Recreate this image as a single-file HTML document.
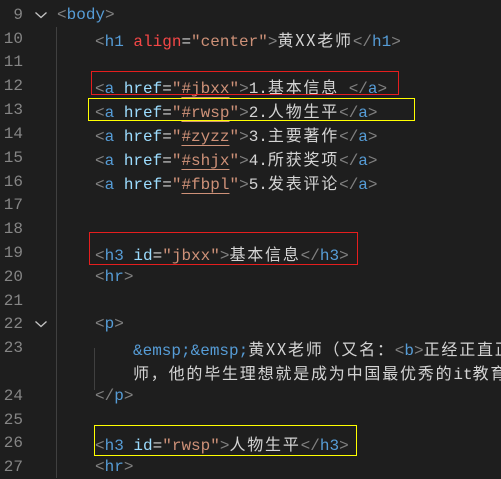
<!DOCTYPE html>
<html><head><meta charset="utf-8"><style>
body{margin:0;width:501px;height:478px;background:#1e1e1e;overflow:hidden;position:relative;font-family:"Liberation Mono","Noto Sans CJK SC",monospace;font-size:16px;}
.r{position:absolute;left:0;height:24px;line-height:24px;white-space:nowrap;color:#d4d4d4;width:501px;}
.n{position:absolute;right:478px;color:#858585;text-align:right;width:40px;font-size:16px}
.t{position:absolute;}
.g{color:#808080}.k{color:#569cd6}.a{color:#9cdcfe}.s{color:#ce9178}.x{color:#f44747}
.u{text-decoration:underline;text-decoration-color:#ce9178;text-underline-offset:4px}
.c{font-family:"Noto Sans CJK SC",sans-serif;letter-spacing:1.8px}
.box{position:absolute;border:1.5px solid;box-sizing:border-box}
.ig{position:absolute;width:1px;background:#404040}
.f{position:absolute;left:34px;top:8px}
</style></head><body>
<div class="ig" style="left:56px;top:27px;height:451px"></div>
<div class="ig" style="left:94px;top:348px;height:42px"></div>

<div class="r" style="top:3px"><span class="n">9</span><svg class="f" width="14" height="8" viewBox="0 0 14 8"><path d="M1.5 1.5 L7 6.5 L12.5 1.5" fill="none" stroke="#c5c5c5" stroke-width="1.3"/></svg><span class="t" style="left:57px"><span class="g">&lt;</span><span class="k">body</span><span class="g">&gt;</span></span></div>
<div class="r" style="top:27px"><span class="n">10</span><span class="t" style="left:95px"><span class="g">&lt;</span><span class="k">h1</span> <span class="x">align</span>=<span class="s">"center"</span><span class="g">&gt;</span><span class="c">黄XX老师</span><span class="g">&lt;/</span><span class="k">h1</span><span class="g">&gt;</span></span></div>
<div class="r" style="top:50px"><span class="n">11</span></div>
<div class="r" style="top:74px"><span class="n">12</span><span class="t" style="left:95px"><span class="g">&lt;</span><span class="k">a</span> <span class="a">href</span>=<span class="s">"<span class="u">#jbxx</span>"</span><span class="g">&gt;</span>1.<span class="c">基本信息</span> <span class="g">&lt;/</span><span class="k">a</span><span class="g">&gt;</span></span></div>
<div class="r" style="top:98px"><span class="n">13</span><span class="t" style="left:95px"><span class="g">&lt;</span><span class="k">a</span> <span class="a">href</span>=<span class="s">"<span class="u">#rwsp</span>"</span><span class="g">&gt;</span>2.<span class="c">人物生平</span><span class="g">&lt;/</span><span class="k">a</span><span class="g">&gt;</span></span></div>
<div class="r" style="top:122px"><span class="n">14</span><span class="t" style="left:95px"><span class="g">&lt;</span><span class="k">a</span> <span class="a">href</span>=<span class="s">"<span class="u">#zyzz</span>"</span><span class="g">&gt;</span>3.<span class="c">主要著作</span><span class="g">&lt;/</span><span class="k">a</span><span class="g">&gt;</span></span></div>
<div class="r" style="top:146px"><span class="n">15</span><span class="t" style="left:95px"><span class="g">&lt;</span><span class="k">a</span> <span class="a">href</span>=<span class="s">"<span class="u">#shjx</span>"</span><span class="g">&gt;</span>4.<span class="c">所获奖项</span><span class="g">&lt;/</span><span class="k">a</span><span class="g">&gt;</span></span></div>
<div class="r" style="top:170px"><span class="n">16</span><span class="t" style="left:95px"><span class="g">&lt;</span><span class="k">a</span> <span class="a">href</span>=<span class="s">"<span class="u">#fbpl</span>"</span><span class="g">&gt;</span>5.<span class="c">发表评论</span><span class="g">&lt;/</span><span class="k">a</span><span class="g">&gt;</span></span></div>
<div class="r" style="top:193px"><span class="n">17</span></div>
<div class="r" style="top:217px"><span class="n">18</span></div>
<div class="r" style="top:241px"><span class="n">19</span><span class="t" style="left:95px"><span class="g">&lt;</span><span class="k">h3</span> <span class="a">id</span>=<span class="s">"jbxx"</span><span class="g">&gt;</span><span class="c">基本信息</span><span class="g">&lt;/</span><span class="k">h3</span><span class="g">&gt;</span></span></div>
<div class="r" style="top:265px"><span class="n">20</span><span class="t" style="left:95px"><span class="g">&lt;</span><span class="k">hr</span><span class="g">&gt;</span></span></div>
<div class="r" style="top:289px"><span class="n">21</span></div>
<div class="r" style="top:312px"><span class="n">22</span><svg class="f" width="14" height="8" viewBox="0 0 14 8"><path d="M1.5 1.5 L7 6.5 L12.5 1.5" fill="none" stroke="#c5c5c5" stroke-width="1.3"/></svg><span class="t" style="left:95px"><span class="g">&lt;</span><span class="k">p</span><span class="g">&gt;</span></span></div>
<div class="r" style="top:336px"><span class="n">23</span><span class="t" style="left:133px"><span class="k">&amp;emsp;&amp;emsp;</span><span class="c">黄XX老师（又名：</span><span class="g">&lt;</span><span class="k">b</span><span class="g">&gt;</span><span class="c">正经正直正</span></span></div>
<div class="r" style="top:360px"><span class="t" style="left:133px"><span class="c">师，他的毕生理想就是成为中国最优秀的</span>it<span class="c">教育</span></span></div>
<div class="r" style="top:384px"><span class="n">24</span><span class="t" style="left:95px"><span class="g">&lt;/</span><span class="k">p</span><span class="g">&gt;</span></span></div>
<div class="r" style="top:408px"><span class="n">25</span></div>
<div class="r" style="top:431px"><span class="n">26</span><span class="t" style="left:95px"><span class="g">&lt;</span><span class="k">h3</span> <span class="a">id</span>=<span class="s">"rwsp"</span><span class="g">&gt;</span><span class="c">人物生平</span><span class="g">&lt;/</span><span class="k">h3</span><span class="g">&gt;</span></span></div>
<div class="r" style="top:455px"><span class="n">27</span><span class="t" style="left:95px"><span class="g">&lt;</span><span class="k">hr</span><span class="g">&gt;</span></span></div>

<div class="box" style="left:91px;top:71px;width:308px;height:24px;border-color:#e51e1e"></div>
<div class="box" style="left:88px;top:98px;width:327px;height:23px;border-color:#ffff00"></div>
<div class="box" style="left:89px;top:232px;width:269px;height:33px;border-color:#e51e1e"></div>
<div class="box" style="left:94px;top:425px;width:263px;height:31px;border-color:#ffff00"></div>
</body></html>
